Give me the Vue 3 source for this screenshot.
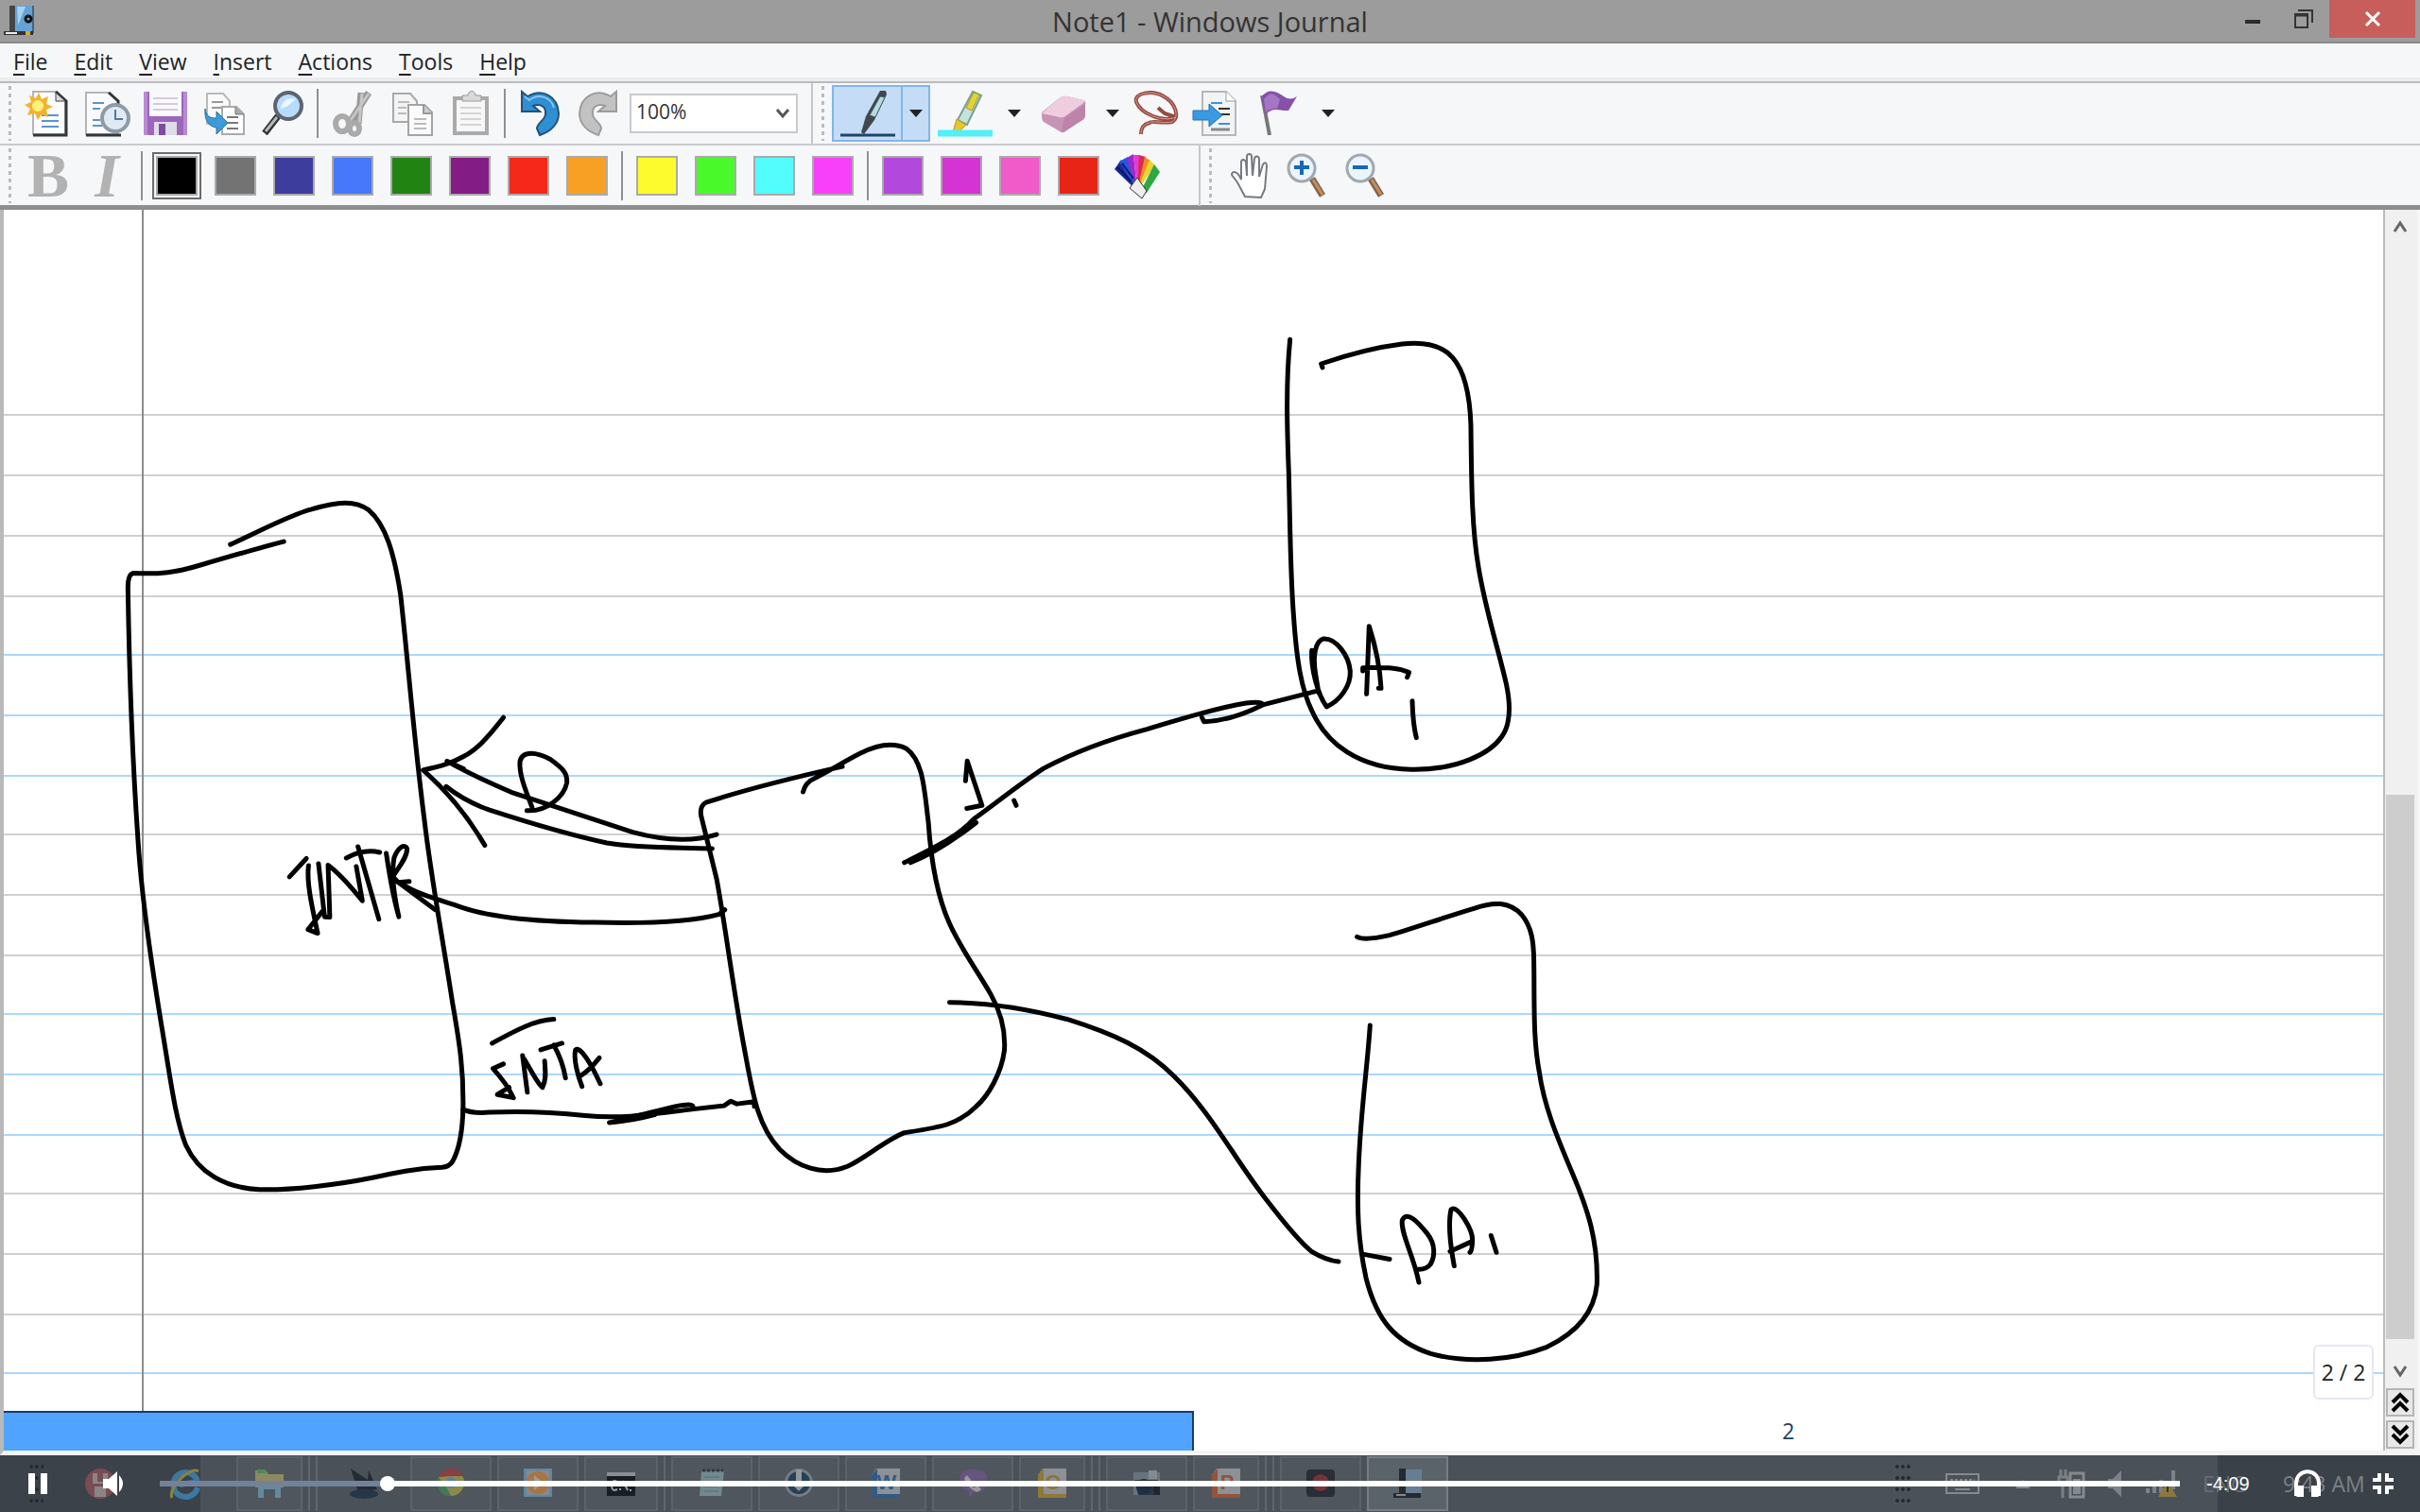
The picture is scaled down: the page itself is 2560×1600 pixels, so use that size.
<script setup>
import { ref } from 'vue'

const menus = ['File', 'Edit', 'View', 'Insert', 'Actions', 'Tools', 'Help']

const page = '<path d="M8 1h25l9 9v36H8z" fill="#fbfbfd" stroke="#b4b4b8" stroke-width="2"/><path d="M32 1l11 10v36H8" fill="none" stroke="#33363a" stroke-width="3"/><path d="M32 2v9h10z" fill="#d9dade" stroke="#444" stroke-width="1"/>'
const twoPages = '<path d="M3 3h18l7 8v22H3z" fill="#f4f4f4" stroke="#a9a9a9" stroke-width="2"/><path d="M8 12h12M8 18h9M8 24h9" stroke="#bcbcbc" stroke-width="2"/><path d="M19 15h17l8 8v24H19z" fill="#fafafa" stroke="#a4a4a4" stroke-width="2"/><path d="M35 15v9h9" fill="#ccc" stroke="#999" stroke-width="2"/>'

const icons = {
  new: page + '<path d="M17 26h18M17 32h18M17 38h18" stroke="#5b93cf" stroke-width="2"/><path d="M14 2l3 7 7-3-2 8 7 3-7 3 2 8-7-3-4 6-3-7-8 2 3-7-6-4 7-3-2-7 7 3z" fill="#f3b32c"/><circle cx="13" cy="16" r="6" fill="#fff27a"/>',
  recent: '<path d="M2 2h25l9 9v35H2z" fill="#fbfbfd" stroke="#b4b4b8" stroke-width="2"/><path d="M26 2l10 9v6M2 47h37" fill="none" stroke="#33363a" stroke-width="3"/><path d="M9 13h12M9 19h8M9 31h8M9 37h10" stroke="#5b93cf" stroke-width="2"/><circle cx="33" cy="29" r="14" fill="#dfeaf5" stroke="#8e9aa6" stroke-width="4"/><path d="M33 20v10h8" fill="none" stroke="#54789c" stroke-width="2"/>',
  save: '<path d="M1 1h46v46H6l-5-5z" fill="#9d66bd"/><path d="M1 1h4v46H1zM43 1h4v46h-4z" fill="#b98ad3"/><path d="M7 1h34v26H7z" fill="#faf7fd"/><path d="M11 8h26M11 14h26M11 20h26" stroke="#d3cadb" stroke-width="2"/><path d="M12 33h24v14H12z" fill="#dedce6"/><path d="M17 35h7v12h-7z" fill="#814aa3"/>',
  export: '<path d="M6 3h17l7 8v24H6z" fill="#fafafa" stroke="#b9b9b9" stroke-width="2"/><path d="M11 12h12M11 18h12" stroke="#999" stroke-width="2"/><path d="M22 17h15l8 8v21H22z" fill="#fff" stroke="#aaa" stroke-width="2"/><path d="M36 17v8h9" fill="#aaa" stroke="#777"/><path d="M27 28h12M27 34h12M27 40h12" stroke="#777" stroke-width="2"/><path d="M4 19c1 8 5 10 12 10v-7l12 12-12 12v-7C7 38 3 30 4 19z" fill="#3e9bd9" stroke="#2872a6"/>',
  find: '<path d="M19 27L5 45" stroke="#303236" stroke-width="7"/><path d="M18 28L6 43" stroke="#b4b7bc" stroke-width="3"/><ellipse cx="30" cy="16" rx="14" ry="14" fill="#b7dbff" stroke="#5e646e" stroke-width="4"/><path d="M22 19C24 9 31 7 38 9c-4 2-7 8-16 10z" fill="#ecf7ff"/>',
  cut: '<path d="M41 2L20 35M33 2l-3 33" stroke="#999" stroke-width="7"/><path d="M41 3L20 34M34 3l-3 31" stroke="#c6c6c6" stroke-width="3"/><ellipse cx="13" cy="35" rx="7" ry="8" fill="none" stroke="#aaa" stroke-width="6"/><ellipse cx="26" cy="40" rx="5" ry="6" fill="none" stroke="#aaa" stroke-width="6"/>',
  copy: '<g transform="translate(2)">' + twoPages + '<path d="M25 30h13M25 35h13M25 40h13" stroke="#bbb" stroke-width="2"/></g>',
  paste: '<path d="M6 6h38v41H6z" fill="#aaa"/><path d="M10 10h30v33H10z" fill="#f7f7f7"/><path d="M16 5h6c0-6 8-6 8 0h6v6H16z" fill="#d9d9d9" stroke="#999"/><path d="M14 18h22M14 24h22M14 30h22M14 36h22" stroke="#d4d4d4" stroke-width="2"/>',
  undo: '<path d="M5 1v21h19l-7-6c8-3 14 1 13 9-1 7-9 9-9 15l3 7c12-4 20-12 20-23C43 6 27-3 11 6z" fill="#2f8fd3" stroke="#245275" stroke-width="2"/><path d="M8 6l5 4c10-8 23-3 26 8" fill="none" stroke="#86c6ef" stroke-width="2"/>',
  redo: '<path d="M43 1v21H24l7-6c-8-3-14 1-13 9 1 7 9 9 9 15l-3 7C12 43 4 35 4 24 5 6 21-3 37 6z" fill="#c2c2c2" stroke="#9c9c9c" stroke-width="2"/>',
  pen: '<path d="M44 1h6l1 4-13 27-11 15-3-2 5-17z" fill="#40484e"/><path d="M44 7l5 1-10 21-6-2z" fill="#b5dce0" stroke="#486068"/><path d="M2 48h58" stroke="#1d4769" stroke-width="3"/>',
  marker: '<path d="M39 2l9 4-15 31-10-5z" fill="#c5e3dd" stroke="#7b9d98" stroke-width="2"/><path d="M40 3l6 2-8 17-6-3z" fill="#e3d432" stroke="#a79b28"/><path d="M22 31l10 6-8 8h-6z" fill="#e6c72e" stroke="#b3952d"/><path d="M2 46h58" stroke="#50f0f7" stroke-width="7"/>',
  eraser: '<path d="M1 23L18 9q5-4 10-3l17 4q3 1 2 6v9q0 4-3 6L27 42q-4 4-7 1L3 33q-2-2-2-6z" fill="#c894b5"/><path d="M1 24L18 9q5-4 10-3l17 4q2 1 0 3L27 26q-3 3-7 2z" fill="#efcddf"/><path d="M47 14v11q0 4-3 6L27 42q-4 4-5 0l3-13z" fill="#bd83a8"/>',
  lasso: '<path d="M45 28C30 34 8 24 3 12C0 2 20-1 32 6c13 7 17 22 9 27-10 2-22-2-24 1-8 2-9 7-9 12M26 18l7 6 12 4" fill="none" stroke="#944b43" stroke-width="4"/><path d="M45 28C30 34 8 24 3 12C0 2 20-1 32 6c13 7 17 22 9 27-10 2-22-2-24 1-8 2-9 7-9 12" fill="none" stroke="#df9b8b" stroke-width="1"/>',
  insert: '<path d="M11 1h25l10 10v36H11z" fill="#f2f3f4" stroke="#b7b7b7" stroke-width="2"/><path d="M36 1v10h10" fill="#fff" stroke="#999"/><path d="M20 13h12M28 35h12" stroke="#3993e0" stroke-width="2"/><path d="M28 19h12M28 25h12" stroke="#333" stroke-width="2"/><path d="M20 41h20" stroke="#888" stroke-width="3"/><path d="M1 21h17v-7l14 12-14 12v-7H1z" fill="#3a9ae1" stroke="#2672b5"/>',
  flag: '<path d="M6 5l8 42" stroke="#777" stroke-width="4"/><path d="M5 7C13-4 22 1 29 6q7 5 14 0l-9 15c-9 1-15-5-24 4z" fill="#8750a9"/><path d="M8 9C16-1 20 5 25 9l-3 10q-6-1-12 4z" fill="#a377c1"/>',
  palette: '<path d="M24 40L0 17l7-10z" fill="#152b9c"/><path d="M24 40L5 9l9-5z" fill="#2856e0"/><path d="M24 40L13 5l7-4z" fill="#9b29c9"/><path d="M24 40L20 2l7 0z" fill="#e33bd2"/><path d="M24 40L26 2l7 2z" fill="#d92a4d"/><path d="M24 40L32 4l6 4z" fill="#ee8f23"/><path d="M24 40L37 7l6 6z" fill="#e5d72f"/><path d="M26 44L42 12l6 8-14 22z" fill="#2da843"/><path d="M24 26l10 14-5 8-13-11z" fill="#eee" stroke="#333"/><path d="M3 15l15 15M8 11l12 16" stroke="#0c1763" stroke-width="2"/>',
  hand: '<path d="M20 46l-8-15-6-8c0-4 5-4 8 1l2 4V10c0-4 4-4 5 0l1 14V4c0-4 5-4 5 0l1 20 2-18c1-4 5-3 5 1v18l4-13c2-3 4-2 4 2l-2 24-4 9z" fill="#fff" stroke="#767b80" stroke-width="2"/>',
  zoomIn: '<path d="M29 27l11 18" stroke="#80624c" stroke-width="7"/><path d="M30 28l10 16" stroke="#c58d5e" stroke-width="3"/><circle cx="18" cy="16" r="14" fill="#eaf5ff" stroke="#a3a8ae" stroke-width="3"/><path d="M18 8v15M10 15h16" stroke="#1767ba" stroke-width="4"/>',
  zoomOut: '<path d="M29 27l11 18" stroke="#80624c" stroke-width="7"/><path d="M30 28l10 16" stroke="#c58d5e" stroke-width="3"/><circle cx="18" cy="16" r="14" fill="#eaf5ff" stroke="#a3a8ae" stroke-width="3"/><path d="M10 15h16" stroke="#1767ba" stroke-width="4"/>',
}

const fileTools = [['new', 'New note'], ['recent', 'Recent notes'], ['save', 'Save'], ['export', 'Import'], ['find', 'Find']]
const editTools = [['cut', 'Cut'], ['copy', 'Copy'], ['paste', 'Paste']]
const historyTools = [['undo', 'Undo'], ['redo', 'Redo']]
const viewTools = [['hand', 'Pan'], ['zoomIn', 'Zoom in'], ['zoomOut', 'Zoom out']]

const swatchGroups = [
  ['#000000', '#737373', '#3d3d9e', '#4778fb', '#218312', '#831c84', '#f62819', '#f8a024'],
  ['#fdfb2e', '#4af92a', '#53fcfd', '#f840fa'],
  ['#b348dd', '#d334d3', '#f05bc9', '#e72416'],
]
const penColor = ref('#000000')
const zoom = ref('100%')
const position = ref(11)

const gray = '#d0d0d2'
const blue = '#aad8ff'
const rules = [
  [439, gray], [503, gray], [567, gray], [631, gray], [693, blue], [757, blue], [821, blue], [883, gray], [947, gray],
  [1011, gray], [1073, blue], [1137, blue], [1201, blue], [1263, gray], [1327, gray], [1391, gray], [1453, blue],
]

const ink = [
  {
    // processor block, its bus arrow and signal names
    place: 'translate(100 500) scale(0.4592 0.4975)',
    strokes: [
      'M313 153C380 125 450 90 500 78C560 62 600 58 632 80C670 110 690 170 705 260C722 400 735 560 760 740C775 860 800 980 825 1130C842 1220 850 1270 849 1350C848 1400 840 1440 825 1465Q817 1477 800 1478C740 1480 690 1490 640 1500C560 1515 450 1527 380 1525C300 1522 240 1490 210 1430C185 1370 175 1290 155 1180C130 1040 108 900 100 780C88 620 80 420 77 250Q76 215 90 214C150 217 190 212 240 198C310 179 380 160 436 147',
      'M1433 770C1380 785 1320 785 1240 765C1140 735 1040 705 960 680C910 660 860 640 812 614L850 630',
      'M942 521C905 565 880 590 850 604C820 620 790 626 757 633C790 660 850 715 899 793',
      'M810 668C840 690 870 705 910 718C1000 745 1090 770 1180 788C1260 800 1340 797 1423 800',
      'M1008 712C990 670 978 640 980 615C985 590 1020 595 1050 610C1080 630 1090 640 1088 660C1082 690 1040 722 996 719',
      'M449 860L488 821M493 836C488 870 500 920 514 980L492 972L528 930',
      'M516 832L530 945L542 946L538 835C560 850 590 880 617 911L603 838',
      'M580 820Q620 800 657 808M607 796L655 950',
      'M672 810C680 860 690 910 701 945C690 900 684 850 690 820C700 795 715 790 720 800C720 820 700 840 687 860L700 872L725 870',
      'M708 875C740 895 780 905 830 920C900 945 1000 955 1150 957C1280 960 1380 955 1438 940L1452 930M700 872L785 930',
      'M849 1355Q870 1364 910 1361C980 1358 1060 1361 1130 1368C1220 1376 1290 1364 1380 1354L1450 1347L1466 1337L1480 1343L1520 1338L1520 1348',
      'M1378 1352Q1385 1340 1340 1348C1290 1358 1240 1372 1186 1383C1220 1380 1250 1376 1290 1366',
      'M916 1214C960 1192 1010 1165 1058 1163',
      'M942 1258L918 1268C935 1285 955 1310 965 1330L928 1323L955 1308',
      'M986 1240L997 1318M990 1248C1005 1270 1020 1300 1032 1308C1042 1290 1038 1270 1037 1252',
      'M1028 1228L1077 1214M1058 1218Q1078 1250 1085 1288',
      'M1123 1306C1112 1280 1103 1245 1108 1228C1120 1220 1145 1260 1165 1300M1120 1283C1135 1275 1150 1260 1163 1245',
    ],
  },
  {
    // controller block and the lines that leave it
    place: 'translate(700 740) scale(0.4464 0.3954)',
    strokes: [
      'M335 248Q340 222 365 210C400 190 430 168 470 145C510 122 550 115 580 132C620 165 622 240 632 330C638 430 650 520 682 600C710 670 750 730 780 790C805 840 815 890 812 940C805 1000 775 1060 745 1090C700 1140 660 1145 575 1160C530 1180 480 1230 440 1250C380 1278 320 1250 280 1205C225 1140 215 1050 195 930C170 780 150 600 130 480L93 310Q90 285 105 276C190 245 330 205 428 180',
      'M720 218L724 165L759 284L723 292',
      'M835 271L840 284',
      'M575 437C640 400 700 370 740 320C790 280 850 225 905 185C980 140 1050 110 1150 80C1250 45 1330 20 1385 10Q1425 5 1424 15C1380 40 1330 58 1285 60L1280 48M1424 15L1549 -21',
      'M590 437C650 410 700 370 745 330',
      'M682 811C790 812 880 832 960 856C1070 895 1150 935 1215 1010C1300 1105 1350 1215 1420 1320C1470 1395 1510 1450 1540 1478Q1575 1502 1604 1505',
    ],
  },
  {
    // upper device
    place: 'translate(1260 340) scale(0.3333)',
    strokes: [
      'M314 58C300 200 305 350 310 480C315 680 315 800 325 930C335 1080 350 1170 385 1240C430 1340 530 1420 700 1423C850 1425 950 1370 985 1320C1015 1280 1015 1220 1000 1150C975 1040 935 920 912 780C890 650 890 500 888 330C885 240 870 160 830 115C790 70 730 65 670 72C590 82 500 105 413 135L417 147',
      'M383 1045C380 1100 400 1180 430 1224C470 1205 508 1160 505 1110C500 1060 460 1005 420 1008C395 1015 385 1060 395 1120L405 1180',
      'M557 1183L565 968C585 1030 600 1110 603 1165L595 1165M545 1110L545 1100C600 1100 650 1095 692 1115L686 1130',
      'M702 1205Q704 1280 715 1322',
    ],
  },
  {
    // lower device
    place: 'translate(1300 920) scale(0.3333 0.3571)',
    strokes: [
      'M448 462C440 580 420 700 412 870C405 1010 410 1100 435 1210C470 1340 530 1400 640 1435C760 1465 900 1455 1010 1415C1110 1370 1160 1310 1168 1230C1172 1100 1140 1010 1090 900C1040 790 1000 700 985 600C965 500 970 400 968 280C968 210 960 170 930 135C890 95 840 95 780 115C690 140 600 170 510 195Q430 212 407 200',
      'M425 1140L510 1155',
      'M603 1224C585 1140 545 1080 550 1040C565 1010 600 1045 630 1080C655 1110 655 1145 640 1170Q625 1188 595 1185',
      'M715 1175C702 1110 695 1050 705 1008C725 990 775 1070 773 1100Q772 1130 765 1135M702 1132L770 1103',
      'M832 1085L849 1135',
    ],
  },
]

const letterTile = (fill) => `<path d="M6 1h25v30H1V8z" fill="#8d9096"/><path d="M1 8l6-7v27H1z" fill="${fill}"/><path d="M1 28h30v4H1z" fill="${fill}"/>`
const apps = [
  { name: 'File Explorer', stack: 2, art: '<path d="M1 3h11l3 4h16v14H1z" fill="#8c8a62"/><path d="M3 2h9v4H3z" fill="#4d8a55"/><path d="M4 32V18q0-3 3-3h18q3 0 3 3v14h-6v-9H10v9z" fill="#65899c"/>' },
  { name: 'Ink', plain: true, art: '<path d="M2 1l18 12 1-10 9 20-20 3z" fill="#252b33"/><ellipse cx="16" cy="28" rx="15" ry="5" fill="#26374a"/>' },
  { name: 'Chrome', art: '<circle cx="16" cy="16" r="14" fill="#8c8a48"/><path d="M3 10A14 14 0 0 1 29 9H16z" fill="#8a3f40"/><path d="M3 10l8 10 5 10A14 14 0 0 1 3 10z" fill="#427a54"/><circle cx="16" cy="16" r="6" fill="#607f9b"/>' },
  { name: 'Media Player', art: '<path d="M1 1h30v30H1z" fill="#5e87a4"/><path d="M4 3h24v26H4z" fill="#868a8d"/><circle cx="16" cy="16" r="12" fill="#a87542"/><path d="M12 8l10 8-10 8z" fill="#9b9b9b"/>' },
  { name: 'Command Prompt', stack: 1, art: '<path d="M1 5h30v25H1z" fill="#181e26"/><path d="M1 5h30v4H1z" fill="#8a8e93"/><path d="M12 15q-6-3-6 4t6 4M15 15v2M15 22v2M18 14l5 10M26 23v2" stroke="#9a9da1" stroke-width="2" fill="none"/>' },
  { name: 'Notepad', art: '<path d="M5 4h24l-3 26H3z" fill="#71898f"/><path d="M8 10h16M8 15h16M7 20h16M7 25h16" stroke="#526f77"/><path d="M6 3h22" stroke="#33383c" stroke-width="3" stroke-dasharray="3 2"/>' },
  { name: 'Downloads', art: '<circle cx="16" cy="16" r="15" fill="#747d85"/><circle cx="16" cy="16" r="12" fill="#254057"/><path d="M13 2h6v15h5l-8 8-8-8h5z" fill="#92979b"/>' },
  { name: 'Word', letter: 'W', ink: '#315b85', art: letterTile('#315b85') },
  { name: 'Viber', art: '<path d="M16 2c15 0 16 5 15 15-1 7-5 9-13 9l-6 6v-7C4 23 2 19 2 12 3 4 7 2 16 2z" fill="#65547d"/><path d="M10 8l4 5-2 3q3 5 6 5l3-2 4 4q-3 4-7 2Q9 20 7 11z" fill="#999"/>' },
  { name: 'Outlook', stack: 2, letter: 'O', ink: '#8a7438', art: letterTile('#8e7a34') },
  { name: 'Screen Capture', art: '<path d="M2 5h28v24H2z" fill="#67747f"/><path d="M3 13h25v16H7z" fill="#263747"/><circle cx="13" cy="20" r="8" fill="#1d2e45"/><path d="M18 3h9v9h-9z" fill="#858a8f"/><path d="M22 14h8v15h-6z" fill="#20242e"/>' },
  { name: 'PowerPoint', stack: 2, letter: 'P', ink: '#94533a', art: letterTile('#94533a') },
  { name: 'Recorder', art: '<rect x="1" y="2" width="30" height="29" rx="4" fill="#292e37"/><circle cx="16" cy="16" r="9" fill="#733637"/>' },
  { name: 'Windows Journal', active: true, art: '<path d="M7 1h7v27H7z" fill="#252a30"/><path d="M14 2h17v25H14z" fill="#667e93"/><path d="M1 27h29v5H1z" fill="#252a30"/><path d="M4 29h10" stroke="#83878b" stroke-width="2"/>' },
]
</script>

<template>
  <div class="window">
    <header class="titlebar">
      <svg class="app-icon" viewBox="0 0 34 34"><path d="M7 1h6v27H7z" fill="#454545"/><path d="M14 1h18v29H14z" fill="#64a3d3"/><path d="M15 2h9L16 22z" fill="#a6d2ef"/><path d="M1 28h31v4H1z" fill="#333"/><path d="M3 29h12v2H3z" fill="#eee"/><path d="M24 28h5v4h-5z" fill="#d5aa39"/><circle cx="27" cy="15" r="3" fill="none" stroke="#111" stroke-width="3"/><path d="M32 1v29" stroke="#222"/></svg>
      <h1>Note1 - Windows Journal</h1>
      <div class="window-buttons">
        <button aria-label="Minimize"><svg width="20" height="24"><path d="M2 15h16" stroke="#2c2c2c" stroke-width="4"/></svg></button>
        <button aria-label="Restore"><svg width="22" height="22"><path d="M2 6h13v14H2zM5 2h15v13" fill="none" stroke="#333" stroke-width="2"/><path d="M2 7h14" stroke="#333" stroke-width="3"/></svg></button>
        <button class="close" aria-label="Close"><svg width="16" height="16"><path d="M1 1l14 14M15 1L1 15" stroke="#fff" stroke-width="3"/></svg></button>
      </div>
    </header>

    <nav class="menubar">
      <button v-for="m in menus" :key="m"><u>{{ m[0] }}</u>{{ m.slice(1) }}</button>
    </nav>

    <div class="bar">
      <span class="grip"></span>
      <button v-for="[id, label] in fileTools" :key="id" class="tool" :aria-label="label"><svg viewBox="0 0 48 48" v-html="icons[id]"></svg></button>
      <span class="sep"></span>
      <button v-for="[id, label] in editTools" :key="id" class="tool" :aria-label="label"><svg viewBox="0 0 48 48" v-html="icons[id]"></svg></button>
      <span class="sep"></span>
      <button v-for="[id, label] in historyTools" :key="id" class="tool" :aria-label="label"><svg viewBox="0 0 48 48" v-html="icons[id]"></svg></button>
      <div class="zoom">
        <select v-model="zoom" aria-label="Zoom level"><option>100%</option><option>200%</option></select>
        <svg width="16" height="12"><path d="M2 2l6 7 6-7" fill="none" stroke="#555" stroke-width="3"/></svg>
      </div>
      <span class="bar-end"></span>
      <span class="grip"></span>
      <div class="split chosen"><button class="main" aria-label="Pen"><svg class="wide" viewBox="0 0 62 50" v-html="icons.pen"></svg></button><button class="more" aria-label="Pen options"></button></div>
      <div class="split"><button class="main" aria-label="Highlighter"><svg class="wide" viewBox="0 0 62 50" v-html="icons.marker"></svg></button><button class="more" aria-label="Highlighter options"></button></div>
      <div class="split"><button class="main" aria-label="Eraser"><svg viewBox="0 0 48 48" v-html="icons.eraser"></svg></button><button class="more" aria-label="Eraser options"></button></div>
      <button class="tool" aria-label="Selection tool"><svg viewBox="0 0 48 48" v-html="icons.lasso"></svg></button>
      <button class="tool" aria-label="Insert space"><svg viewBox="0 0 48 48" v-html="icons.insert"></svg></button>
      <div class="split"><button class="main" aria-label="Flag"><svg viewBox="0 0 48 48" v-html="icons.flag"></svg></button><button class="more" aria-label="Flag options"></button></div>
    </div>

    <div class="bar colors">
      <span class="grip"></span>
      <button class="tool letter">B</button>
      <button class="tool letter italic">I</button>
      <template v-for="(group, g) in swatchGroups" :key="g">
        <span class="sep"></span>
        <button v-for="c in group" :key="c" class="tool swatch" :class="{ picked: c === penColor }" :aria-label="'Color ' + c" @click="penColor = c">
          <span><i :style="{ background: c }"></i></span>
        </button>
      </template>
      <button class="tool" aria-label="More colors"><svg viewBox="0 0 48 48" v-html="icons.palette"></svg></button>
      <span class="bar-end far"></span>
      <span class="grip"></span>
      <button v-for="[id, label] in viewTools" :key="id" class="tool" :aria-label="label"><svg viewBox="0 0 48 48" v-html="icons[id]"></svg></button>
    </div>

    <main class="workspace">
      <div class="paper">
        <svg class="sheet">
          <g transform="translate(-4 -222)">
            <line v-for="[y, color] in rules" :key="y" x1="4" x2="101%" :y1="y" :y2="y" :stroke="color" stroke-width="2" />
            <line x1="151" x2="151" y1="222" y2="1494" stroke="#8c8c8c" stroke-width="2" />
            <g v-for="part in ink" :key="part.place" class="ink" :transform="part.place">
              <path v-for="d in part.strokes" :key="d" :d="d" />
            </g>
          </g>
        </svg>
        <div class="page-foot"><div class="band"></div><span>2</span></div>
        <div class="page-count">2 / 2</div>
      </div>
      <aside class="scroll">
        <button class="arrow" aria-label="Scroll up"><svg width="16" height="14"><path d="M2 12l6-9 6 9" fill="none" stroke="#666" stroke-width="3"/></svg></button>
        <div class="track"><div class="thumb"></div></div>
        <button class="arrow" aria-label="Scroll down"><svg width="16" height="14"><path d="M2 2l6 9 6-9" fill="none" stroke="#666" stroke-width="3"/></svg></button>
        <button class="jump" aria-label="Previous page"><svg width="20" height="22"><path d="M2 11l8-8 8 8M2 20l8-8 8 8" fill="none" stroke="#000" stroke-width="4"/></svg></button>
        <button class="jump" aria-label="Next page"><svg width="20" height="22"><path d="M2 2l8 8 8-8M2 11l8 8 8-8" fill="none" stroke="#000" stroke-width="4"/></svg></button>
      </aside>
    </main>

    <footer class="taskbar">
      <div class="quick">
        <span class="dots"></span>
        <svg viewBox="0 0 32 32"><circle cx="16" cy="16" r="16" fill="#794b53"/><path d="M8 5h5v9h6V5h5v11H8zM10 19h12v11H10z" fill="#8a8585"/></svg>
        <svg viewBox="0 0 32 32"><path d="M29 20a13 13 0 1 1 0-6L10 17" fill="none" stroke="#3c78a0" stroke-width="6"/><path d="M2 31C-3 22 20-3 30 3" fill="none" stroke="#8d8240" stroke-width="3"/></svg>
      </div>
      <div class="apps">
        <div v-for="a in apps" :key="a.name" class="cell">
          <button :class="{ plain: a.plain, active: a.active }" :aria-label="a.name">
            <svg viewBox="0 0 32 34"><g v-html="a.art"></g><text v-if="a.letter" x="17" y="23" :fill="a.ink">{{ a.letter }}</text></svg>
          </button>
          <i v-for="n in a.stack || 0" :key="n"></i>
        </div>
      </div>
      <div class="tray">
        <span class="dots"></span>
        <svg class="kbd" viewBox="0 0 36 22"><path d="M1 1h34v20H1z" fill="none" stroke="#858a90" stroke-width="2"/><path d="M5 7h26M5 11h26" stroke="#858a90" stroke-width="2" stroke-dasharray="3 2"/><path d="M10 17h16" stroke="#858a90" stroke-width="2"/></svg>
        <svg class="up" viewBox="0 0 16 10"><path d="M0 10l8-9 8 9z" fill="#858a90"/></svg>
        <svg class="batt" viewBox="0 0 30 32"><path d="M4 1v8M9 1v8M2 9h9v6H2zM6 15v16" fill="none" stroke="#7b8087" stroke-width="3"/><path d="M14 5h14v25H14z" fill="none" stroke="#858a90" stroke-width="3"/><path d="M17 11h8v16h-8z" fill="#858a90"/></svg>
        <svg class="spk" viewBox="0 0 16 30"><path d="M0 10h5L14 1v28L5 20H0z" fill="#7d8288"/></svg>
        <svg class="net" viewBox="0 0 34 30"><path d="M2 20v5M9 16v9M16 11v14M29 1v20" stroke="#7d8288" stroke-width="4"/><path d="M23 12l10 17H13z" fill="#8a783e"/><path d="M23 18v6" stroke="#333" stroke-width="2"/></svg>
        <span class="lang">ENG</span>
        <span class="clock">9:43 AM</span>
      </div>

      <div class="player">
        <button class="pause" aria-label="Pause"><svg width="20" height="22"><path d="M0 0h7v22H0zM13 0h7v22h-7z" fill="#fff"/></svg></button>
        <button class="mute" aria-label="Mute"><svg width="22" height="26"><path d="M0 8h6l9-8v26l-9-8H0z" fill="#fff"/><path d="M17 4q8 9 0 18z" fill="#fff"/></svg></button>
        <input v-model="position" type="range" min="0" max="100" aria-label="Playback position" :style="{ '--played': position + '%' }">
        <time>-4:09</time>
        <button class="audio" aria-label="Audio only"><svg width="28" height="30"><path d="M2 28V15C2-2 26-2 26 15v13" fill="none" stroke="#fff" stroke-width="4"/><path d="M2 17h8v12H3l-3-3v-6zM18 17h8l2 3v6l-3 3h-7z" fill="#fff"/></svg></button>
        <button class="shrink" aria-label="Exit full screen"><svg width="22" height="22"><path d="M7 0v7H0M15 0v7h7M7 22v-7H0M15 22v-7h7" fill="none" stroke="#fff" stroke-width="4"/></svg></button>
      </div>
    </footer>
  </div>
</template>

<style>
body { margin: 0; }
</style>

<style scoped>
* { box-sizing: border-box; }
button { border: 0; padding: 0; margin: 0; background: none; font: inherit; color: inherit; }
svg { display: block; flex: none; overflow: visible; }

.window {
  display: flex;
  flex-direction: column;
  min-height: 100vh;
  background: #f5f7f9;
  color: #222;
  font-family: "Open Sans", "Noto Sans", sans-serif;
  font-size: 23px;
}

.titlebar {
  display: grid;
  grid-template-columns: 1fr auto 1fr;
  height: 46px;
  background: #9c9c9c;
  border-bottom: 2px solid #8a8a8a;
}
.app-icon { width: 34px; height: 34px; margin: 5px 0 0 3px; }
.titlebar h1 { margin: 0; font-size: 29px; font-weight: 400; line-height: 46px; color: #333; }
.window-buttons { display: flex; justify-content: flex-end; height: 40px; padding-right: 5px; }
.window-buttons button { display: grid; place-items: center; width: 54px; }
.window-buttons .close { width: 91px; background: #c75e5b; }

.menubar {
  display: flex;
  gap: 28px;
  height: 42px;
  padding-left: 14px;
  border-bottom: 2px solid #b8babd;
  box-shadow: inset 0 -4px #ececee;
}
.menubar button { line-height: 38px; padding-bottom: 2px; }
.menubar u { text-decoration-thickness: 2px; text-underline-offset: 4px; }

.bar {
  display: flex;
  align-items: center;
  height: 66px;
  border-bottom: 2px solid #c8cacd;
}
.bar.colors { height: 68px; border-bottom: 5px solid #8e8e8e; }
.grip {
  width: 20px;
  height: 58px;
  background: repeating-linear-gradient(#b9bbbe 0 4px, transparent 4px 8px) center / 3px 58px no-repeat;
}
.tool { display: grid; place-items: center; flex: none; width: 62px; height: 58px; }
.tool svg, .split svg { width: 48px; height: 48px; }
.sep { width: 12px; height: 52px; background: linear-gradient(#8e9194, #8e9194) center / 2px 52px no-repeat; }
.zoom {
  display: grid;
  align-items: center;
  width: 178px;
  margin-left: 2px;
  border: 2px solid #c9cacc;
  background: #fff;
}
.zoom select {
  grid-area: 1 / 1;
  appearance: none;
  height: 38px;
  border: 0;
  padding: 0 0 4px 5px;
  background: none;
  color: #333;
  font: inherit;
  font-size: 21px;
}
.zoom svg { grid-area: 1 / 1; justify-self: end; margin-right: 6px; pointer-events: none; }
.bar-end { width: 2px; height: 64px; margin-left: 14px; background: #c4c6c9; }
.bar-end.far { margin-left: 34px; }

.split { display: flex; width: 104px; height: 60px; }
.split button { display: grid; place-items: center; }
.split .main { width: 74px; }
.split .more { width: 30px; }
.split .more::before { content: ""; border: 7px solid transparent; border-top: 8px solid #222; border-bottom: 0; }
.split svg.wide { width: 62px; height: 50px; }
.split.chosen { border: 2px solid #82b5ec; background: #c4dcf6; }
.split.chosen .more { border-left: 2px solid #82b5ec; }

.letter { font: bold 66px/50px "Liberation Serif", serif; color: #b2b2b2; }
.letter.italic { font-style: italic; }
.swatch span { display: block; padding: 4px; }
.swatch.picked span { padding: 2px; border: 2px solid #6c6c6c; }
.swatch i { display: block; width: 44px; height: 42px; border: 2px solid #aaa; }

.workspace {
  display: flex;
  flex: 1;
  background: #fff;
  border: solid #b9b9b9;
  border-width: 0 3px 5px 4px;
  border-right-color: #f6f6f6;
  border-bottom-color: #f4f4f4;
}
.paper { position: relative; display: flex; flex: 1; flex-direction: column; min-width: 0; }
.sheet { flex: 1; width: 100%; min-height: 1270px; overflow: hidden; }
.ink path { fill: none; stroke: #000; stroke-width: 5px; stroke-linecap: round; stroke-linejoin: round; vector-effect: non-scaling-stroke; }
.page-foot { display: grid; grid-template-columns: 1fr 1fr; height: 42px; }
.band { background: #50a4ff; border: solid #173d66; border-width: 2px 2px 0 0; }
.page-foot span { text-align: center; line-height: 42px; color: #1f4258; }
.page-count {
  position: absolute;
  right: 10px;
  bottom: 54px;
  width: 64px;
  border: 2px solid #e4e7f5;
  border-radius: 6px;
  background: #fff;
  line-height: 54px;
  text-align: center;
  white-space: nowrap;
}

.scroll {
  display: flex;
  flex-direction: column;
  width: 36px;
  padding: 0 3px 2px 1px;
  border-left: 2px solid #bbb;
  background: #f0f0f0;
}
.scroll button { display: grid; place-items: center; flex: none; }
.arrow { height: 36px; }
.track { display: flex; flex: 1; flex-direction: column; justify-content: flex-end; }
.thumb { height: 49%; margin-bottom: 16px; background: #cdcdcd; }
.jump { height: 30px; margin-bottom: 4px; border: 2px solid #b5b5b5; background: #e8e8e8; }
.jump:last-child { margin-bottom: 0; }

.taskbar { position: relative; display: flex; height: 60px; background: #4a5159; }
.quick { display: flex; align-items: center; width: 212px; padding-left: 30px; background: #3b4249; }
.quick svg { width: 32px; height: 32px; margin-left: 44px; }
.quick svg + svg { margin-left: 58px; }
.dots { width: 18px; height: 42px; background: radial-gradient(circle at 3px 3px, #262b31 2px, transparent 2px) 0 0 / 6px 12px; }
.apps { display: flex; padding-left: 36px; }
.cell { display: flex; gap: 5px; width: 92px; padding: 1px 4px 1px 2px; }
.cell button { display: grid; place-items: center; flex: 1; border: 2px solid #5b6269; background: #4f565e; }
.cell button.plain { border-color: transparent; background: none; }
.cell button.active { border-color: #767d84; background: #5b636a; }
.cell i { width: 3px; border-right: 2px solid #5f666d; }
.cell svg { width: 32px; height: 34px; }
.cell text { font: bold 22px "Liberation Sans", sans-serif; text-anchor: middle; }
.tray { display: flex; align-items: center; margin-left: auto; color: #7d8288; white-space: nowrap; }
.kbd { width: 36px; margin-left: 36px; }
.up { width: 16px; margin-left: 38px; }
.batt { width: 30px; margin-left: 28px; }
.spk { width: 16px; margin-left: 24px; }
.net { width: 34px; margin-left: 24px; }
.lang { z-index: 1; width: 16px; margin-left: 26px; color: #666c73; }
.clock { align-self: stretch; width: 214px; padding-left: 69px; background: #3a4148; line-height: 60px; }

.player { position: absolute; inset: 0; z-index: 2; display: flex; align-items: center; padding: 0 28px 0 30px; color: #fff; }
.mute { margin-left: 59px; }
.player input {
  appearance: none;
  flex: 1;
  height: 16px;
  margin: 0 28px 0 38px;
  background: linear-gradient(90deg, #738299 var(--played), #fff var(--played)) center / 100% 6px no-repeat;
}
.player input::-webkit-slider-thumb { appearance: none; width: 16px; height: 16px; border-radius: 50%; background: #fff; }
.player time { width: 48px; font: 20px "Liberation Sans", sans-serif; }
.audio { margin-left: 45px; }
.shrink { margin-left: 55px; }
</style>
